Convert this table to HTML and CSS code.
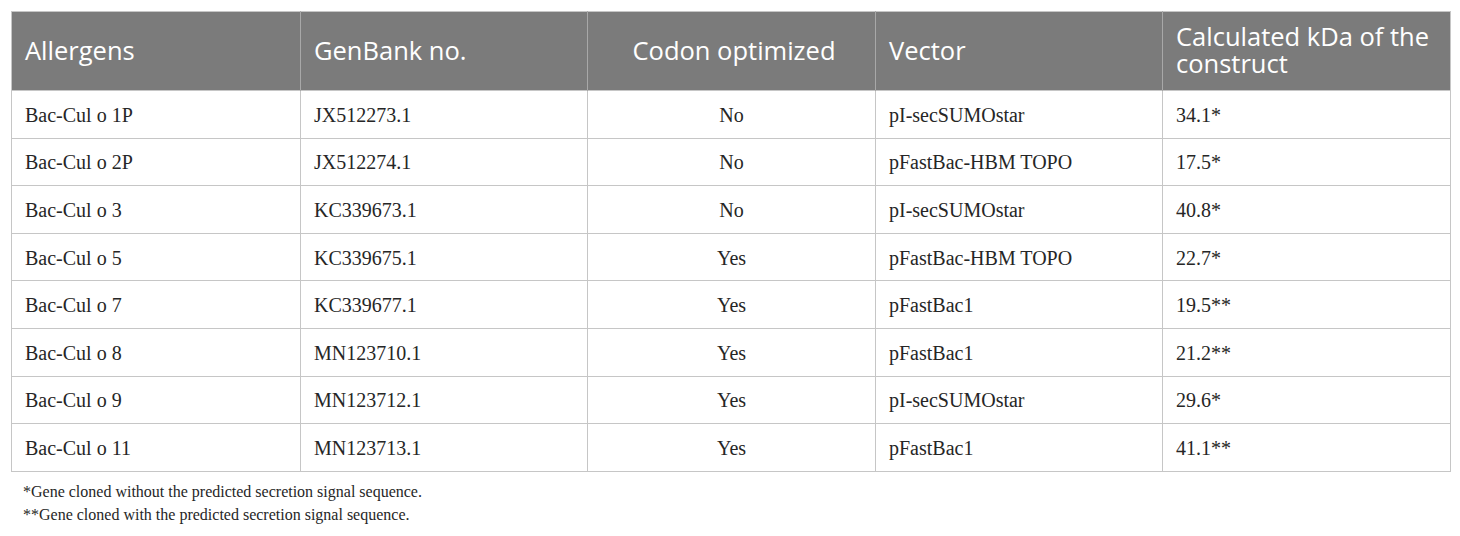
FILE: index.html
```html
<!DOCTYPE html>
<html>
<head>
<meta charset="utf-8">
<link rel="stylesheet" href="styles.css">
</head>
<body>
<div class="wrap">
<table class="tbl">
<colgroup>
<col class="c1"><col class="c2"><col class="c3"><col class="c4"><col class="c5">
</colgroup>
<thead>
<tr>
<th>Allergens</th>
<th>GenBank no.</th>
<th class="center">Codon optimized</th>
<th>Vector</th>
<th>Calculated kDa of the construct</th>
</tr>
</thead>
<tbody>
<tr><td>Bac-Cul o 1P</td><td>JX512273.1</td><td class="center">No</td><td>pI-secSUMOstar</td><td>34.1*</td></tr>
<tr><td>Bac-Cul o 2P</td><td>JX512274.1</td><td class="center">No</td><td>pFastBac-HBM TOPO</td><td>17.5*</td></tr>
<tr><td>Bac-Cul o 3</td><td>KC339673.1</td><td class="center">No</td><td>pI-secSUMOstar</td><td>40.8*</td></tr>
<tr><td>Bac-Cul o 5</td><td>KC339675.1</td><td class="center">Yes</td><td>pFastBac-HBM TOPO</td><td>22.7*</td></tr>
<tr><td>Bac-Cul o 7</td><td>KC339677.1</td><td class="center">Yes</td><td>pFastBac1</td><td>19.5**</td></tr>
<tr><td>Bac-Cul o 8</td><td>MN123710.1</td><td class="center">Yes</td><td>pFastBac1</td><td>21.2**</td></tr>
<tr><td>Bac-Cul o 9</td><td>MN123712.1</td><td class="center">Yes</td><td>pI-secSUMOstar</td><td>29.6*</td></tr>
<tr><td>Bac-Cul o 11</td><td>MN123713.1</td><td class="center">Yes</td><td>pFastBac1</td><td>41.1**</td></tr>
</tbody>
</table>
<div class="notes">
<p>*Gene cloned without the predicted secretion signal sequence.</p>
<p>**Gene cloned with the predicted secretion signal sequence.</p>
</div>
</div>
</body>
</html>
```
FILE: styles.css
```css
html, body {
  margin: 0;
  padding: 0;
  background: #ffffff;
}
.wrap {
  padding: 11px 11px 0 11px;
}
.tbl {
  width: 1439px;
  border-collapse: collapse;
  table-layout: fixed;
  border: 1px solid #c6c6c6;
}
.c1 { width: 289px; }
.c2 { width: 287px; }
.c3 { width: 288px; }
.c4 { width: 287px; }
.c5 { width: 288px; }
.tbl th {
  background: #7b7b7b;
  color: #ffffff;
  font-family: "Open Sans", sans-serif;
  font-weight: 400;
  font-size: 25.5px;
  line-height: 27px;
  text-align: left;
  height: 79px;
  box-sizing: border-box;
  padding: 0 8px 2px 13px;
  border-left: 1px solid #a8a8a8;
  vertical-align: middle;
}
.tbl th:first-child { border-left: none; }
.tbl td {
  font-family: "Liberation Serif", serif;
  font-size: 20px;
  color: #262626;
  height: 47.6px;
  box-sizing: border-box;
  padding: 2px 13px 0 13px;
  border: 1px solid #c6c6c6;
  vertical-align: middle;
}
.tbl .center { text-align: center; }
.notes {
  font-family: "Liberation Serif", serif;
  font-size: 16px;
  color: #262626;
  padding: 10px 0 0 12px;
}
.notes p {
  margin: 0 0 3px 0;
  line-height: 20px;
}
```
